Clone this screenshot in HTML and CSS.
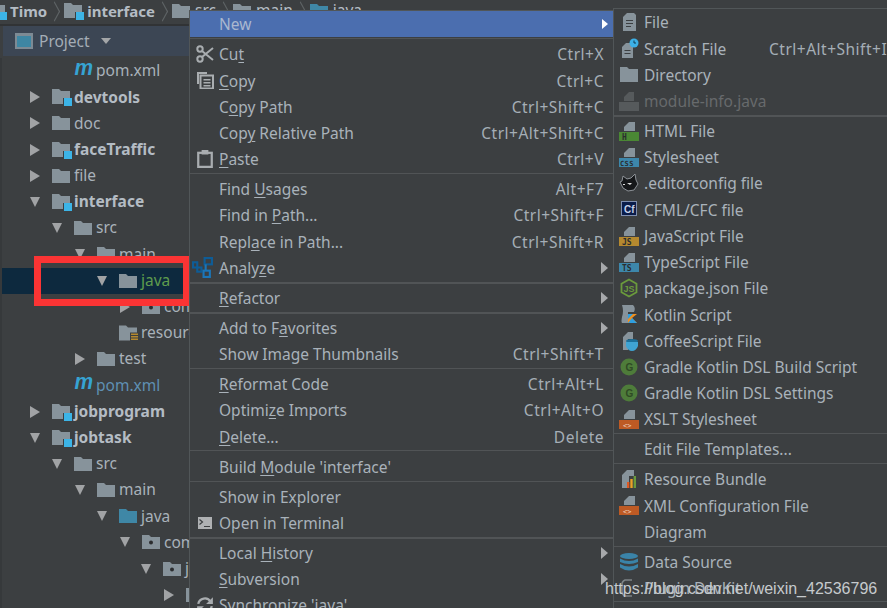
FILE: index.html
```html
<!DOCTYPE html>
<html lang="en">
<head>
<meta charset="utf-8">
<title>Project context menu</title>
<link rel="stylesheet" href="styles.css">
</head>
<body>
<svg class="defs" aria-hidden="true">
  <symbol id="folder" viewBox="0 0 18 14"><path d="M0 0h7l2 2h9v12H0z"/></symbol>
  <symbol id="module" viewBox="0 0 20 18"><path class="fd" d="M0 1h7l2 2h9v7h-7v6H0z"/><rect class="bd" x="12" y="10" width="8" height="8"/></symbol>
  <symbol id="package" viewBox="0 0 18 14"><path class="fd" d="M0 0h7l2 2h9v12H0z"/><circle cx="9" cy="7.500" r="2" fill="#2b2d2f"/></symbol>
  <symbol id="resfolder" viewBox="0 0 20 17"><path class="fd" d="M0 1h7l2 2h9v5h-7v8H0z"/><path d="M12 9h7v1.500h-7zM12 11.500h7V13h-7zM12 14h7v1.500h-7z" fill="#b5892f"/></symbol>
  <symbol id="page" viewBox="0 0 20 20"><path class="fd" d="M8 1h7l2 2v16H4V5z"/><path d="M7 8h7v1H7zM7 11h7v1H7zM7 14h5v1H7z" fill="#3c3f41"/></symbol>
  <symbol id="scratch" viewBox="0 0 20 20"><path class="fd" d="M3 9l4-4h7v15H3z"/><path d="M5.500 12h6v1h-6zM5.500 15h6v1h-6z" fill="#3c3f41"/><circle cx="15" cy="5" r="4.500" fill="#3cb0e6"/><path d="M15 2.500V5h2" fill="none" stroke="#0f3d55" stroke-width="1"/></symbol>
  <symbol id="dim" viewBox="0 0 20 20"><path d="M5 6l5-5h5v9H5z" fill="#565a5c"/><rect y="11" width="20" height="9" fill="#565a5c"/></symbol>
  <symbol id="doc-top" viewBox="0 0 20 20"><path class="fd" d="M5 6l5-5h6v9H5z"/></symbol>
  <symbol id="scissors" viewBox="0 0 18 18"><g fill="none" stroke="#a9adb0" stroke-width="2"><circle cx="4" cy="4" r="2.700"/><circle cx="4" cy="14" r="2.700"/><path d="M6 6l11 9M6 12L17 3"/></g></symbol>
  <symbol id="copy" viewBox="0 0 18 18"><path d="M1 1h10v2H3v10H1z" fill="#a9adb0"/><rect x="4.500" y="4.500" width="12.500" height="13" fill="none" stroke="#a9adb0" stroke-width="2"/><path d="M7.500 8h7v1.500h-7zM7.500 11h7v1.500h-7zM7.500 14h7v1.500h-7z" fill="#a9adb0"/></symbol>
  <symbol id="paste" viewBox="0 0 14 16"><rect x="1" y="2.500" width="12" height="12.500" fill="none" stroke="#a9adb0" stroke-width="2"/><rect x="4" y="0" width="6" height="4" fill="#a9adb0"/></symbol>
  <symbol id="analyze" viewBox="0 0 20 20"><g fill="none" stroke="#0e5c96" stroke-width="2"><rect x="12" y="1" width="7" height="6"/><rect x="1" y="5" width="4" height="5"/><rect x="5" y="10" width="4" height="4"/></g><g fill="none" stroke="#1b76b8" stroke-width="2"><rect x="11" y="13" width="6" height="6"/><path d="M13 7v6"/></g></symbol>
  <symbol id="terminal" viewBox="0 0 14 12"><rect width="14" height="12" fill="#afb1b3"/><path d="M1.500 2.500l3 2.500-3 2.500" fill="none" stroke="#3c3f41" stroke-width="1.200"/><path d="M6 9h6v1H6z" fill="#3c3f41"/></symbol>
  <symbol id="sync" viewBox="0 0 16 16"><g fill="none" stroke="#a9adb0" stroke-width="2"><path d="M2 7a6 6 0 0 1 11-2"/><path d="M14 9a6 6 0 0 1-11 2"/></g><path d="M15 1v6h-6zM1 15V9h6z" fill="#a9adb0"/></symbol>
</svg>

<div class="app">
  <header class="crumbs">
    <svg class="ic-mod crumb-first"><use href="#module"/></svg>
    <b class="crumb-name">Timo</b>
    <span class="chev"></span>
    <svg class="ic-mod"><use href="#module"/></svg>
    <b class="crumb-name">interface</b>
    <span class="chev"></span>
    <svg class="ic f"><use href="#folder"/></svg>
    <span class="crumb-name">src</span>
    <span class="chev"></span>
    <svg class="ic f"><use href="#folder"/></svg>
    <span class="crumb-name">main</span>
    <span class="chev"></span>
    <svg class="ic f blue"><use href="#folder"/></svg>
    <span class="crumb-name">java</span>
  </header>

  <div class="panel-head">
    <span class="win"></span>
    <span class="panel-title">Project</span>
    <span class="down-small"></span>
  </div>

  <ul class="tree">
    <li class="row d1"><span class="tw"></span><i class="mvn">m</i><span class="nm">pom.xml</span></li>
    <li class="row d0"><span class="tw r"></span><svg class="ic-mod"><use href="#module"/></svg><b class="nm">devtools</b></li>
    <li class="row d0"><span class="tw r"></span><svg class="ic f"><use href="#folder"/></svg><span class="nm">doc</span></li>
    <li class="row d0"><span class="tw r"></span><svg class="ic-mod"><use href="#module"/></svg><b class="nm">faceTraffic</b></li>
    <li class="row d0"><span class="tw r"></span><svg class="ic f"><use href="#folder"/></svg><span class="nm">file</span></li>
    <li class="row d0"><span class="tw o"></span><svg class="ic-mod"><use href="#module"/></svg><b class="nm">interface</b></li>
    <li class="row d1"><span class="tw o"></span><svg class="ic f"><use href="#folder"/></svg><span class="nm">src</span></li>
    <li class="row d2"><span class="tw o"></span><svg class="ic f"><use href="#folder"/></svg><span class="nm">main</span></li>
    <li class="row d3 sel"><span class="tw o"></span><svg class="ic f"><use href="#folder"/></svg><span class="nm green">java</span></li>
    <li class="row d4"><span class="tw r"></span><svg class="ic f"><use href="#package"/></svg><span class="nm">com</span></li>
    <li class="row d3"><span class="tw"></span><svg class="ic-mod"><use href="#resfolder"/></svg><span class="nm">resources</span></li>
    <li class="row d2"><span class="tw r"></span><svg class="ic f"><use href="#folder"/></svg><span class="nm">test</span></li>
    <li class="row d1"><span class="tw"></span><i class="mvn">m</i><span class="nm modified">pom.xml</span></li>
    <li class="row d0"><span class="tw r"></span><svg class="ic-mod"><use href="#module"/></svg><b class="nm">jobprogram</b></li>
    <li class="row d0"><span class="tw o"></span><svg class="ic-mod"><use href="#module"/></svg><b class="nm">jobtask</b></li>
    <li class="row d1"><span class="tw o"></span><svg class="ic f"><use href="#folder"/></svg><span class="nm">src</span></li>
    <li class="row d2"><span class="tw o"></span><svg class="ic f"><use href="#folder"/></svg><span class="nm">main</span></li>
    <li class="row d3"><span class="tw o"></span><svg class="ic f blue"><use href="#folder"/></svg><span class="nm">java</span></li>
    <li class="row d4"><span class="tw o"></span><svg class="ic f"><use href="#package"/></svg><span class="nm">com</span></li>
    <li class="row d5"><span class="tw o"></span><svg class="ic f"><use href="#package"/></svg><span class="nm">jobtask</span></li>
    <li class="row d6"><span class="tw r"></span><svg class="ic f"><use href="#package"/></svg><span class="nm">job</span></li>
  </ul>

  <div class="red-box"></div>

  <nav class="menu main-menu">
    <div class="item active"><span class="slot"></span><span class="lbl">New</span><span class="sub-arrow white"></span></div>
    <hr class="sep">
    <div class="item"><span class="slot"><svg class="mi"><use href="#scissors"/></svg></span><span class="lbl">Cu<u>t</u></span><span class="key">Ctrl+X</span></div>
    <div class="item"><span class="slot"><svg class="mi"><use href="#copy"/></svg></span><span class="lbl"><u>C</u>opy</span><span class="key">Ctrl+C</span></div>
    <div class="item"><span class="slot"></span><span class="lbl">C<u>o</u>py Path</span><span class="key">Ctrl+Shift+C</span></div>
    <div class="item"><span class="slot"></span><span class="lbl">Cop<u>y</u> Relative Path</span><span class="key">Ctrl+Alt+Shift+C</span></div>
    <div class="item"><span class="slot"><svg class="mi"><use href="#paste"/></svg></span><span class="lbl"><u>P</u>aste</span><span class="key">Ctrl+V</span></div>
    <hr class="sep">
    <div class="item"><span class="slot"></span><span class="lbl">Find <u>U</u>sages</span><span class="key">Alt+F7</span></div>
    <div class="item"><span class="slot"></span><span class="lbl">Find in <u>P</u>ath...</span><span class="key">Ctrl+Shift+F</span></div>
    <div class="item"><span class="slot"></span><span class="lbl">Repl<u>a</u>ce in Path...</span><span class="key">Ctrl+Shift+R</span></div>
    <div class="item"><span class="slot"><svg class="mi wide"><use href="#analyze"/></svg></span><span class="lbl">Analy<u>z</u>e</span><span class="sub-arrow"></span></div>
    <hr class="sep thick">
    <div class="item"><span class="slot"></span><span class="lbl"><u>R</u>efactor</span><span class="sub-arrow"></span></div>
    <hr class="sep thick">
    <div class="item"><span class="slot"></span><span class="lbl">Add to F<u>a</u>vorites</span><span class="sub-arrow"></span></div>
    <div class="item"><span class="slot"></span><span class="lbl">Show Image Thumbnails</span><span class="key">Ctrl+Shift+T</span></div>
    <hr class="sep">
    <div class="item"><span class="slot"></span><span class="lbl"><u>R</u>eformat Code</span><span class="key">Ctrl+Alt+L</span></div>
    <div class="item"><span class="slot"></span><span class="lbl">Optimi<u>z</u>e Imports</span><span class="key">Ctrl+Alt+O</span></div>
    <div class="item"><span class="slot"></span><span class="lbl"><u>D</u>elete...</span><span class="key">Delete</span></div>
    <hr class="sep">
    <div class="item"><span class="slot"></span><span class="lbl">Build <u>M</u>odule 'interface'</span></div>
    <hr class="sep">
    <div class="item"><span class="slot"></span><span class="lbl">Show in Explorer</span></div>
    <div class="item"><span class="slot"><svg class="mi term"><use href="#terminal"/></svg></span><span class="lbl">Open in Terminal</span></div>
    <hr class="sep thick">
    <div class="item"><span class="slot"></span><span class="lbl">Local <u>H</u>istory</span><span class="sub-arrow"></span></div>
    <div class="item"><span class="slot"></span><span class="lbl"><u>S</u>ubversion</span><span class="sub-arrow"></span></div>
    <div class="item"><span class="slot"><svg class="mi"><use href="#sync"/></svg></span><span class="lbl">Synchronize 'java'</span></div>
  </nav>

  <nav class="menu sub-menu">
    <div class="item"><span class="slot"><svg class="si"><use href="#page"/></svg></span><span class="lbl">File</span></div>
    <div class="item"><span class="slot"><svg class="si"><use href="#scratch"/></svg></span><span class="lbl fixed">Scratch File</span><span class="key">Ctrl+Alt+Shift+Insert</span></div>
    <div class="item"><span class="slot"><svg class="si f" viewBox="0 0 20 18"><path d="M1 1h7l2 2h9v13H1z"/></svg></span><span class="lbl">Directory</span></div>
    <div class="item off"><span class="slot"><svg class="si"><use href="#dim"/></svg></span><span class="lbl">module-info.java</span></div>
    <hr class="sep thick">
    <div class="item"><span class="slot"><svg class="si" viewBox="0 0 20 20"><use href="#doc-top"/><rect y="11" width="20" height="9" fill="#4a8734"/><text x="3" y="19" class="tag">H</text></svg></span><span class="lbl">HTML File</span></div>
    <div class="item"><span class="slot"><svg class="si" viewBox="0 0 20 20"><use href="#doc-top"/><rect y="11" width="20" height="9" fill="#3d87ab"/><text x="1" y="19" class="tag narrow">CSS</text></svg></span><span class="lbl">Stylesheet</span></div>
    <div class="item"><span class="slot"><svg class="si" viewBox="0 0 20 20"><path d="M1 9l2-1 1-5 4 3 4-1 4-4 1 6 2 4-4 6-6 1-5-3z" fill="#16181a" stroke="#8d9297" stroke-width="1"/><path d="M8 10h5l-2 2zM4 11h2v1H4z" fill="#ddd"/></svg></span><span class="lbl">.editorconfig file</span></div>
    <div class="item"><span class="slot"><svg class="si" viewBox="0 0 20 20"><rect x="2.500" y="2.500" width="15" height="14" fill="#0a1c4a" stroke="#7f8fb0"/><text x="5" y="13.500" class="cf">Cf</text></svg></span><span class="lbl">CFML/CFC file</span></div>
    <div class="item"><span class="slot"><svg class="si" viewBox="0 0 20 20"><use href="#doc-top"/><rect y="11" width="20" height="9" fill="#b5892f"/><text x="3" y="19" class="tag">JS</text></svg></span><span class="lbl">JavaScript File</span></div>
    <div class="item"><span class="slot"><svg class="si" viewBox="0 0 20 20"><use href="#doc-top"/><rect y="11" width="20" height="9" fill="#3d87ab"/><text x="3" y="19" class="tag">TS</text></svg></span><span class="lbl">TypeScript File</span></div>
    <div class="item"><span class="slot"><svg class="si" viewBox="0 0 20 20"><path d="M10 1.500l7.500 4.200v8.600L10 18.500l-7.500-4.200V5.700z" fill="none" stroke="#6a9a3c" stroke-width="1.800"/><text x="4.500" y="14" class="pj">JS</text></svg></span><span class="lbl">package.json File</span></div>
    <div class="item"><span class="slot"><svg class="si" viewBox="0 0 20 20"><path class="fd" d="M3 1h11q3 3 1 7H9v11H3q-1-1 0-6q2-6 0-12z"/><path d="M9 10h9l-5 4 5 5H9z" fill="#f18e1c"/><path d="M9 10h5l-5 5z" fill="#2f9fe0"/><path d="M9 19l4-5 5 5z" fill="#2f9fe0"/></svg></span><span class="lbl">Kotlin Script</span></div>
    <div class="item"><span class="slot"><svg class="si" viewBox="0 0 20 20"><path class="fd" d="M4 6l5-5h5v7H9v11H4z"/><ellipse cx="13" cy="10" rx="6" ry="2" fill="#1c6f99"/><path d="M7 11h12v4q-2 5-6 5t-6-5z" fill="#3fa3d2"/></svg></span><span class="lbl">CoffeeScript File</span></div>
    <div class="item"><span class="slot"><svg class="si" viewBox="0 0 20 20"><circle cx="10" cy="10" r="8.500" fill="#4e7c3a"/><text x="6.500" y="14" class="gr">G</text></svg></span><span class="lbl">Gradle Kotlin DSL Build Script</span></div>
    <div class="item"><span class="slot"><svg class="si" viewBox="0 0 20 20"><circle cx="10" cy="10" r="8.500" fill="#4e7c3a"/><text x="6.500" y="14" class="gr">G</text></svg></span><span class="lbl">Gradle Kotlin DSL Settings</span></div>
    <div class="item"><span class="slot"><svg class="si" viewBox="0 0 20 20"><use href="#doc-top"/><rect y="11" width="20" height="9" fill="#bd5a24"/><text x="4" y="18.500" class="tag code">&lt;&gt;</text></svg></span><span class="lbl">XSLT Stylesheet</span></div>
    <hr class="sep">
    <div class="item"><span class="slot"></span><span class="lbl">Edit File Templates...</span></div>
    <hr class="sep">
    <div class="item"><span class="slot"><svg class="si" viewBox="0 0 20 20"><path class="fd" d="M3 6l5-5h7v6h-5v12H3z"/><rect x="8" y="13" width="2.400" height="6" fill="#e05a24"/><rect x="11.300" y="10" width="2.400" height="9" fill="#e9a227"/><rect x="14.600" y="7" width="2.400" height="12" fill="#6a9a3c"/></svg></span><span class="lbl">Resource Bundle</span></div>
    <div class="item"><span class="slot"><svg class="si" viewBox="0 0 20 20"><use href="#doc-top"/><rect y="11" width="20" height="9" fill="#bd5a24"/><text x="4" y="18.500" class="tag code">&lt;&gt;</text></svg></span><span class="lbl">XML Configuration File</span></div>
    <div class="item"><span class="slot"></span><span class="lbl">Diagram</span></div>
    <hr class="sep">
    <div class="item"><span class="slot"><svg class="si" viewBox="0 0 20 20"><g fill="#3a83a8"><ellipse cx="10" cy="4" rx="9" ry="3"/><path d="M1 6.500q9 5 18 0V10q-9 4-18 0z"/><path d="M1 12q9 5 18 0v3.500q-9 6-18 0z"/></g></svg></span><span class="lbl">Data Source</span></div>
    <div class="item"><span class="slot"><svg class="si" viewBox="0 0 20 20"><path d="M13 2H6a5 5 0 0 0-3 5v6a5 5 0 0 0 3 5h7" fill="none" stroke="#7d8487" stroke-width="1.500"/></svg></span><span class="lbl">Plugin DevKit</span></div>
  </nav>

  <div class="watermark">https://blog.csdn.net/weixin_42536796</div>
</div>
</body>
</html>
```

FILE: styles.css
```css
* { box-sizing: border-box; }
html, body { margin: 0; padding: 0; }
body {
  width: 887px; height: 608px; overflow: hidden;
  background: #3c3f41; color: #adb5bd;
  font: 15.5px/1 "Noto Sans", "Open Sans", sans-serif;
}
.defs { width: 0; height: 0; position: absolute; }
.fd { fill: #87939b; }
.bd { fill: #3cb4e7; }

.app { position: relative; width: 887px; height: 608px; overflow: hidden; display: flex; flex-direction: column; }

/* breadcrumb */
.crumbs {
  height: 26px; flex: none; display: flex; align-items: center;
  border-bottom: 2px solid #313335; padding-bottom: 2px; white-space: nowrap;
}
.crumb-first { margin-left: -13px; margin-right: 4px; }
.crumb-name { margin-left: 5px; color: #b4bcc4; }
.crumbs b { font-weight: 700; font-size: 15px; }
.chev {
  width: 9px; height: 9px; margin: 0 5px 0 3px; flex: none;
  border-top: 1px solid #5e6365; border-right: 1px solid #5e6365;
  transform: scaleX(.55) rotate(45deg) scale(1.6);
}
.ic { width: 18px; height: 14px; flex: none; }
.f { fill: #87939b; }
.blue { fill: #3f87a6; }
.ic-mod { width: 20px; height: 18px; flex: none; margin-right: -2px; }

/* tool window header */
.panel-head {
  height: 30px; flex: none; margin-left: 3px; display: flex; align-items: center;
  padding-left: 12px; background: #3c4654; color: #a4adb6;
}
.win { width: 18px; height: 16px; border: 2px solid #7d8a94; border-top-width: 3px; background: #3e86a3; margin-right: 6px; }
.panel-title { font-size: 15.500px; margin-top: 2px; }
.down-small { margin-left: 11px; width: 0; height: 0; border: 5px solid transparent; border-top: 6px solid #a4a6a8; border-bottom: 0; }

/* tree */
.tree { list-style: none; margin: 2px 0 0; padding: 0 0 0 2px; border-left: 2px solid #36393b; }
.row { height: 26.200px; display: flex; align-items: center; white-space: nowrap; }
.row.sel { background: #0d293e; margin-left: -2px; }
.d0 { padding-left: 26px; }
.d1 { padding-left: 48px; }
.d2 { padding-left: 71px; }
.d3 { padding-left: 93px; }
.row.sel.d3 { padding-left: 95px; }
.d4 { padding-left: 116px; }
.d5 { padding-left: 137px; }
.d6 { padding-left: 160px; }
.tw { width: 22px; flex: none; position: relative; height: 12px; }
.tw.r::before, .tw.o::before { content: ""; position: absolute; width: 0; height: 0; }
.tw.r::before { left: 0; top: 0; border-left: 10px solid #a1a3a5; border-top: 6px solid transparent; border-bottom: 6px solid transparent; }
.tw.o::before { left: 0; top: 1px; border-top: 10px solid #a1a3a5; border-left: 5.500px solid transparent; border-right: 5.500px solid transparent; }
.nm { margin-left: 4px; font-size: 15.500px; color: #a9b2ba; }
b.nm { color: #b4bcc4; font-weight: 700; }
.green { color: #5f9c4d; }
.modified { color: #5f90b3; }
.mvn {
  width: 18px; flex: none; color: #36a3d3; font: italic 700 22px/1 "Liberation Sans", sans-serif;
  transform: translateY(-3px) scaleX(.95);
}

.red-box { position: absolute; left: 34px; top: 256px; width: 156px; height: 50px; border: 7px solid #fb3434; }

/* menus */
.menu { position: absolute; background: #3c3f41; border: 1px solid #515658; white-space: nowrap; }
.main-menu { left: 189px; top: 10px; width: 425px; }
.sub-menu { left: 613px; top: 8px; width: 340px; }
.item { height: 26.220px; display: flex; align-items: center; position: relative; color: #a9b2ba; }
.slot { width: 29px; flex: none; display: flex; justify-content: center; }
.lbl { flex: 1 1 auto; margin-top: 2px; }
.key { margin: 2px 9px 0 0; color: #a5aeb6; letter-spacing: .5px; }
.item u { text-underline-offset: 2px; text-decoration-thickness: 1px; }
.active { background: #4b6eaf; color: #a9b8d0; }
.off { color: #676a6c; }
.sep { height: 3.800px; margin: 0; border: 0; background: linear-gradient(#3c3f41 1px, #515456 1px, #515456 2px, #3c3f41 2px); }
.sep.thick { background: linear-gradient(#3c3f41 1px, #515456 1px, #515456 3px, #3c3f41 3px); }
.sub-arrow { position: absolute; right: 5px; top: 7px; width: 0; height: 0; border-left: 7px solid #a7a9ab; border-top: 6px solid transparent; border-bottom: 6px solid transparent; }
.sub-arrow.white { border-left-color: #fff; top: 8px; border-top-width: 5px; border-bottom-width: 5px; border-left-width: 6px; }
.mi { width: 18px; height: 18px; }
.mi.wide { width: 21px; height: 21px; margin-left: -4px; }
.mi.term { width: 14px; height: 12px; }

.sub-menu .slot { width: 30px; }
.sub-menu .lbl.fixed { flex: 0 0 125px; }
.si { width: 20px; height: 20px; fill: #87939b; }
.tag { font: 700 8px "DejaVu Sans Mono", monospace; fill: #2b2d2f; }
.tag.narrow { font-size: 7px; letter-spacing: .4px; }
.tag.code { fill: #f0d4c0; font-weight: 400; font-size: 7px; }
.cf { font: 700 10px "Liberation Sans", sans-serif; fill: #c5cfe6; }
.pj { font: 700 9px "Liberation Sans", sans-serif; fill: #6a9a3c; }
.gr { font: 700 10px "Liberation Sans", sans-serif; fill: #2f4a25; }

.watermark {
  position: absolute; left: 605px; top: 580px;
  font: 16px/18px "Liberation Sans", sans-serif; color: #c6cacd;
}
```
